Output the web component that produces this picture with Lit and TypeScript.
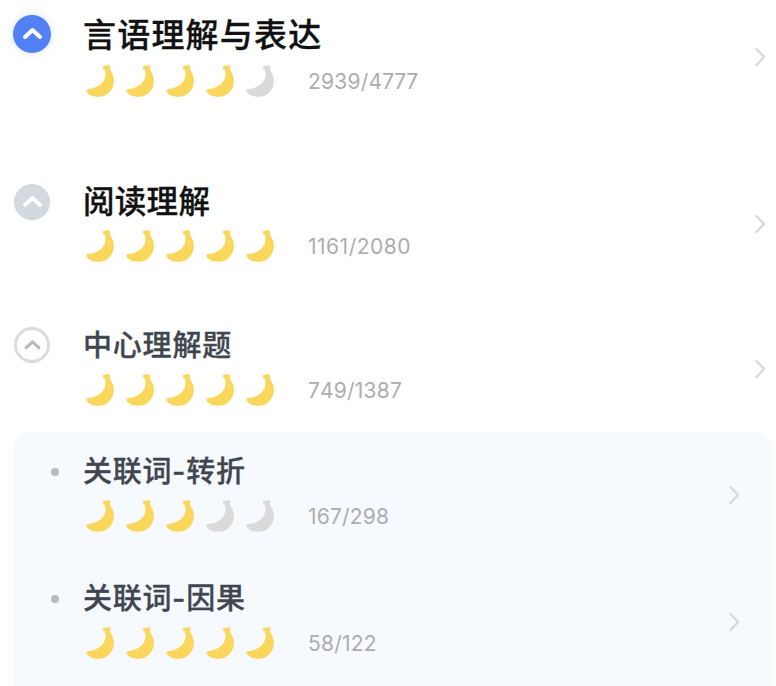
import { LitElement, html, svg, css } from "lit";
import { customElement, property } from "lit/decorators.js";
import { classMap } from "lit/directives/class-map.js";

type Level = "subject" | "chapter" | "topic" | "leaf";

interface Entry {
  title: string;
  level: Level;
  rating: number;
  done: number;
  total: number;
}

const groups: Entry[] = [
  { title: "言语理解与表达", level: "subject", rating: 4, done: 2939, total: 4777 },
  { title: "阅读理解", level: "chapter", rating: 5, done: 1161, total: 2080 },
  { title: "中心理解题", level: "topic", rating: 5, done: 749, total: 1387 },
];

const leaves: Entry[] = [
  { title: "关联词-转折", level: "leaf", rating: 3, done: 167, total: 298 },
  { title: "关联词-因果", level: "leaf", rating: 5, done: 58, total: 122 },
];

@customElement("banana-rating")
export class BananaRating extends LitElement {
  @property({ type: Number }) value = 0;

  static styles = css`
    :host { display: flex; gap: 12px; }
    svg { display: block; width: 28px; height: 32px; fill: #dadada; }
    .on { fill: #fad75a; }
  `;

  render() {
    return [0, 1, 2, 3, 4].map(
      (i) => html`<svg class=${classMap({ on: i < this.value })} viewBox="0 0 28 32">
        <path d="M16.8 2 Q16.8 1 17.8 .9 L23.2 .3 Q24.3 .2 24.3 1.2 L24.3 2.4 Q24.3 3.1 23.7 3.5 C24 6 27.9 9.4 27.9 15.8 C27.9 24.4 21.4 31.8 12.8 31.8 C7 31.8 2.6 29.6 .8 26.9 C0 25.5 .6 24.1 2.4 24.1 C10.4 24 19.6 17.9 19.6 9.6 C19.6 7.6 18.8 6.2 19 4.6 L17.6 4 Q16.7 3.6 16.8 2 Z"></path>
      </svg>`,
    );
  }
}

@customElement("level-marker")
export class LevelMarker extends LitElement {
  @property() level: Level = "leaf";

  static styles = css`
    :host { display: flex; align-items: center; justify-content: center; }
    .disc { box-sizing: border-box; display: flex; width: 36px; height: 36px; border-radius: 50%; }
    .subject { width: 38px; height: 38px; background: #5181f5; box-shadow: 0 0 7px 2px #e6f0fd; }
    .chapter { background: #d2d9df; }
    .topic { border: 3px solid #d8dde2; background: #fff; }
    .dot { width: 8px; height: 8px; border-radius: 50%; background: #b6bcc4; }
    svg { margin: auto; fill: none; stroke: #fff; stroke-width: 4; stroke-linecap: round; stroke-linejoin: round; }
    .topic svg { stroke: #b5babf; stroke-width: 3; }
  `;

  render() {
    if (this.level === "leaf") return html`<span class="dot"></span>`;
    const shape = this.level === "topic" ? svg`<path d="M5 12.8 L11.5 6.8 L18 12.8"></path>` : svg`<path d="M4 13 L11.5 6 L19 13"></path>`;
    return html`<span class="disc ${this.level}"><svg width="23" height="20" viewBox="0 0 23 20">${shape}</svg></span>`;
  }
}

@customElement("progress-row")
export class ProgressRow extends LitElement {
  @property({ attribute: false }) entry!: Entry;

  static styles = css`
    :host { display: block; }
    .row { display: grid; grid-template-columns: 64px 1fr 11px; column-gap: 19px; padding-right: 10px; }
    level-marker { height: 40px; }
    .subject level-marker { height: 39px; }
    .chapter level-marker { height: 41px; }
    .leaf level-marker { height: 41px; }
    .title { height: 40px; line-height: 36px; font-weight: 500; white-space: nowrap; color: #3f464e; font-size: 29px; letter-spacing: .8px; -webkit-text-stroke: .3px currentColor; }
    .subject .title { color: #111; font-size: 33px; line-height: 38px; letter-spacing: 1.2px; }
    .chapter .title { color: #111; font-size: 31.5px; letter-spacing: .3px; }
    .leaf .title { font-family: Inter, "Noto Sans CJK SC", sans-serif; line-height: 42px; letter-spacing: .7px; }
    .meta { display: flex; align-items: center; height: 32px; margin-top: 9px; padding-left: 3px; }
    .subject .meta { margin-top: 11px; }
    .count { margin: 2px 0 0 34px; font: 400 21px/32px Inter, sans-serif; font-kerning: none; letter-spacing: .2px; color: #adadad; }
    .chapter .count { letter-spacing: .5px; }
    .go { margin-top: 34px; width: 11px; height: 20px; fill: none; stroke: #d9d9d9; stroke-width: 2.4; stroke-linecap: round; stroke-linejoin: round; }
    .subject .go, .chapter .go { margin-top: 33px; }
    .leaf { grid-template-columns: 20px 1fr 11px; column-gap: 18px; padding: 0 32px 0 32px; }
  `;

  render() {
    const e = this.entry;
    return html`<div class="row ${e.level}">
      <level-marker level=${e.level}></level-marker>
      <div>
        <div class="title">${e.title}</div>
        <div class="meta">
          <banana-rating .value=${e.rating}></banana-rating>
          <span class="count">${e.done}/${e.total}</span>
        </div>
      </div>
      <svg class="go" viewBox="0 0 11 20"><path d="M1.5 2 L9 10 L1.5 18"></path></svg>
    </div>`;
  }
}

@customElement("app-root")
export class AppRoot extends LitElement {
  static styles = css`
    :host { display: block; box-sizing: border-box; height: 686px; overflow: hidden; background: #fff; padding-top: 14px; font-family: "Noto Sans CJK SC", sans-serif; }
    .groups { display: grid; grid-template-rows: 167px 144px 107px; }
    .panel { display: grid; grid-auto-rows: 127px; margin: 0 4px 0 13px; padding-top: 19px; height: 260px; border-radius: 18px 18px 0 0; background: #f6f9fe; }
  `;

  render() {
    return html`
      <div class="groups">${groups.map((e) => html`<progress-row .entry=${e}></progress-row>`)}</div>
      <div class="panel">${leaves.map((e) => html`<progress-row .entry=${e}></progress-row>`)}</div>
    `;
  }
}
